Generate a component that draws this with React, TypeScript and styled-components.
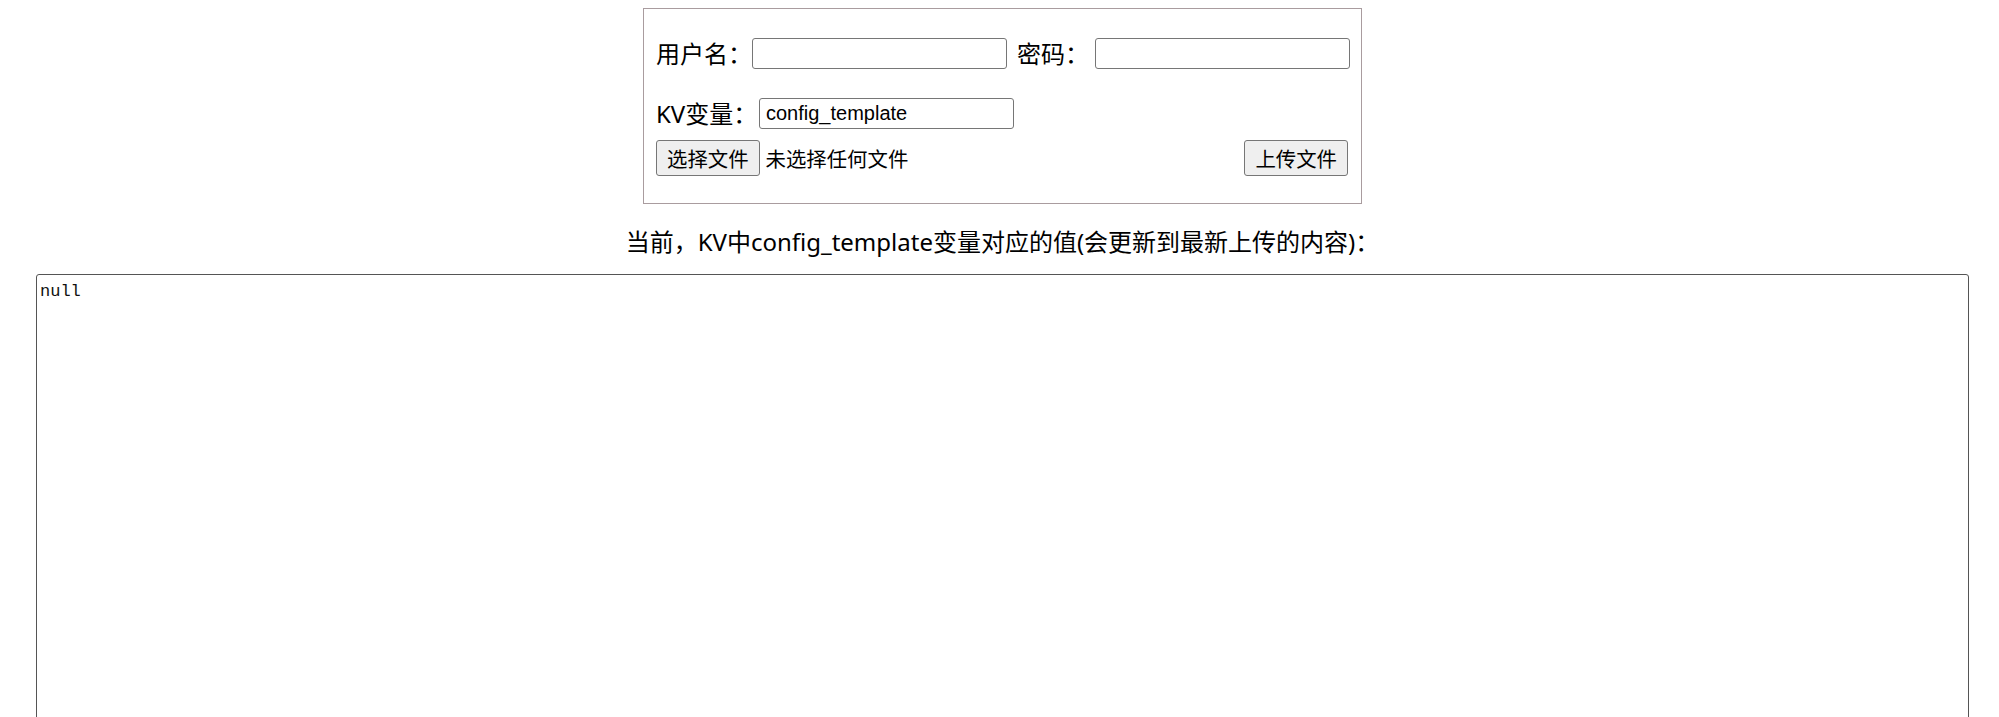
import React from "react";
import styled, { createGlobalStyle } from "styled-components";

const GlobalStyle = createGlobalStyle`
  html, body { background: #ffffff; }
  body {
    margin: 8px 5px 0 11px;
    font-family: "Noto Sans", "Noto Sans CJK SC", sans-serif;
    color: #000000;
  }
`;

const Page = styled.div`
  display: flex;
  flex-direction: column;
  align-items: center;
`;

const Panel = styled.form`
  box-sizing: border-box;
  width: 719px;
  border: 1px solid #a99c9f;
  padding: 29px 13px 27px 12px;
  display: flex;
  flex-direction: column;
`;

const Row = styled.div<{ $top?: number; $between?: boolean }>`
  display: flex;
  align-items: center;
  margin-top: ${(p) => p.$top ?? 0}px;
  justify-content: ${(p) => (p.$between ? "space-between" : "flex-start")};
`;

const Label = styled.label<{ $width: number }>`
  flex: 0 0 ${(p) => p.$width}px;
  width: ${(p) => p.$width}px;
  overflow: visible;
  font-family: "Noto Sans", "Noto Sans CJK SC", sans-serif;
  font-size: 24px;
  line-height: 31px;
  white-space: nowrap;
`;

const TextInput = styled.input`
  box-sizing: border-box;
  width: 255px;
  height: 31px;
  border: 1px solid #767676;
  border-radius: 3px;
  padding: 1px 6px;
  font-family: "Liberation Sans", Arial, sans-serif;
  font-size: 20px;
  color: #000;
  background: #fff;
  outline: none;
`;

const Spacer = styled.span<{ $w: number }>`
  flex: 0 0 ${(p) => p.$w}px;
`;

const FileGroup = styled.div`
  display: flex;
  align-items: center;
  gap: 6px;
`;

const Button = styled.button`
  box-sizing: border-box;
  height: 36px;
  padding: 0 10px;
  border: 1px solid #767676;
  border-radius: 3px;
  background: #efefef;
  font-family: "Noto Sans CJK SC", sans-serif;
  font-size: 20.4px;
  line-height: 1;
  color: #000;
  cursor: pointer;
`;

const FileName = styled.span`
  font-family: "Noto Sans CJK SC", sans-serif;
  font-size: 20.4px;
`;

const Heading = styled.div`
  margin-top: 22px;
  font-family: "Noto Sans", "Noto Sans CJK SC", sans-serif;
  font-size: 24px;
  line-height: 32px;
  text-align: center;
`;

const Output = styled.textarea`
  box-sizing: border-box;
  width: 1933px;
  height: 500px;
  margin-top: 16px;
  border: 1px solid #555555;
  border-radius: 3px;
  padding: 6px 3px;
  font-family: "Liberation Mono", "Courier New", monospace;
  font-size: 17px;
  line-height: 22px;
  color: #111;
  resize: none;
  outline: none;
`;

export default function App() {
  return (
    <>
      <GlobalStyle />
      <Page>
        <Panel onSubmit={(e) => e.preventDefault()}>
          <Row>
            <Label $width={96}>用户名：</Label>
            <TextInput type="text" />
            <Spacer $w={10} />
            <Label $width={78}>密码：</Label>
            <TextInput type="password" />
          </Row>
          <Row $top={29}>
            <Label $width={103}>KV变量：</Label>
            <TextInput type="text" defaultValue="config_template" />
          </Row>
          <Row $top={11} $between>
            <FileGroup>
              <Button type="button">选择文件</Button>
              <FileName>未选择任何文件</FileName>
            </FileGroup>
            <Button type="submit">上传文件</Button>
          </Row>
        </Panel>
        <Heading>当前，KV中config_template变量对应的值(会更新到最新上传的内容)：</Heading>
        <Output readOnly defaultValue="null" />
      </Page>
    </>
  );
}
